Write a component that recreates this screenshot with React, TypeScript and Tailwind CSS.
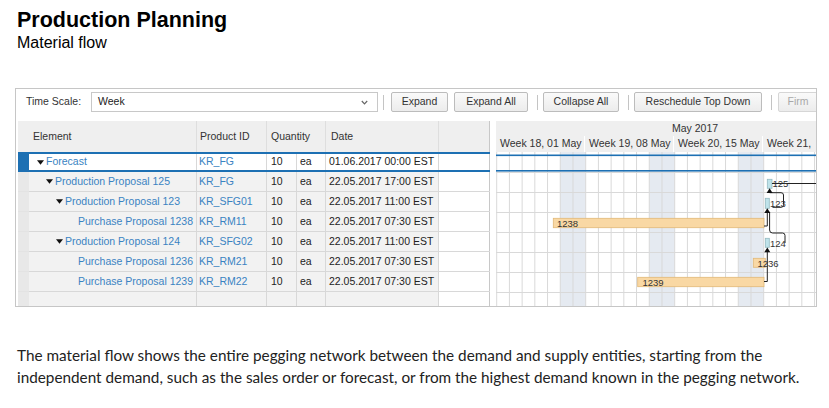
import type { ReactNode } from "react";

type Row = {
  level: number;
  expandable: boolean;
  name: string;
  product: string;
  date: string;
  selected?: boolean;
};

const rows: Row[] = [
  { level: 0, expandable: true, name: "Forecast", product: "KR_FG", date: "01.06.2017 00:00 EST", selected: true },
  { level: 1, expandable: true, name: "Production Proposal 125", product: "KR_FG", date: "22.05.2017 17:00 EST" },
  { level: 2, expandable: true, name: "Production Proposal 123", product: "KR_SFG01", date: "22.05.2017 11:00 EST" },
  { level: 3, expandable: false, name: "Purchase Proposal 1238", product: "KR_RM11", date: "22.05.2017 07:30 EST" },
  { level: 2, expandable: true, name: "Production Proposal 124", product: "KR_SFG02", date: "22.05.2017 11:00 EST" },
  { level: 3, expandable: false, name: "Purchase Proposal 1236", product: "KR_RM21", date: "22.05.2017 07:30 EST" },
  { level: 3, expandable: false, name: "Purchase Proposal 1239", product: "KR_RM22", date: "22.05.2017 07:30 EST" },
];

const cols = "grid grid-cols-[11px_168px_70px_30px_29px_113px_51px]";
const indent = ["pl-[8px]", "pl-[17px]", "pl-[27px]", "pl-[49px]"];

function Button({ children, width, disabled }: { children: ReactNode; width: string; disabled?: boolean }) {
  return (
    <div
      className={`flex h-[20px] shrink-0 items-center justify-center rounded-[2px] border bg-gradient-to-b from-[#fafafa] to-[#ececec] ${width} ${
        disabled ? "border-[#d6d6d6] text-[#a8a8a8]" : "border-[#bcbcbc] text-[#333]"
      }`}
    >
      {children}
    </div>
  );
}

function Sep({ ml }: { ml: string }) {
  return <div className={`h-[15px] w-px shrink-0 bg-[#c4c4c4] ${ml}`} />;
}

function Caret() {
  return (
    <svg width="7" height="5" viewBox="0 0 7 5" className="mr-[2px] shrink-0">
      <path d="M0 0.3 L7 0.3 L3.5 4.8 Z" fill="#111" />
    </svg>
  );
}

function TableRow({ row }: { row: Row }) {
  if (row.selected) {
    return (
      <div className={`${cols} h-[20px]`}>
        <div className="bg-[#1d70b3]" />
        <div className="col-span-6 grid grid-cols-[168px_70px_30px_29px_113px_51px] border-y-2 border-[#1d70b3] bg-white">
          <Cells row={row} />
        </div>
      </div>
    );
  }
  return (
    <div className={`${cols} h-[20px]`}>
      <div className="border-b border-[#e3e3e3] bg-[#e8e8e8]" />
      <div className="col-span-6 grid grid-cols-[168px_70px_30px_29px_113px_51px] border-b border-[#d8d8d8] bg-[#f2f2f2]">
        <Cells row={row} />
      </div>
    </div>
  );
}

function Cells({ row }: { row: Row }) {
  return (
    <>
      <div className={`flex items-center border-r border-[#d8d8d8] ${indent[row.level]} text-[#3a83c2]`}>
        {row.expandable && <Caret />}
        <span className="whitespace-nowrap">{row.name}</span>
      </div>
      <div className="flex items-center border-r border-[#d8d8d8] pl-[2px] text-[#3a83c2]">{row.product}</div>
      <div className="flex items-center border-r border-[#d8d8d8] pl-[4px]">10</div>
      <div className="flex items-center border-r border-[#d8d8d8] pl-[3px]">ea</div>
      <div className="flex items-center whitespace-nowrap border-r border-[#d8d8d8] pl-[3px]">{row.date}</div>
      <div className="border-r border-[#c8c8c8] bg-white" />
    </>
  );
}

const DAY = 89 / 7;
const X0 = 0.7;

function Gantt() {
  const lines = [];
  const shades = [];
  for (let k = 0; k < 26; k++) {
    const x = X0 + k * DAY;
    lines.push(<line key={`v${k}`} x1={x} y1={0} x2={x} y2={154} stroke="#d9d9d9" strokeWidth={1} />);
    if (k % 7 === 5) {
      shades.push(<rect key={`s${k}`} x={x} y={0} width={DAY * 2} height={154} fill="#e5eaf1" />);
    }
  }
  const hlines = [20, 40, 60, 80, 100, 120, 140].map((y) => (
    <line key={`h${y}`} x1={0} y1={y + 0.5} x2={320} y2={y + 0.5} stroke="#d9d9d9" strokeWidth={1} />
  ));
  const label = { fontFamily: "'Liberation Sans', Arial, sans-serif", fontSize: 9.5, fill: "#333" };
  return (
    <svg width="320" height="154" viewBox="0 0 320 154" className="block">
      <rect width="320" height="154" fill="#fff" />
      {shades}
      {lines}
      {hlines}
      <rect x="0" y="2.5" width="320" height="1.6" fill="#1d70b3" />
      <rect x="0" y="18" width="320" height="1.6" fill="#1d70b3" />

      {/* bars */}
      <rect x="57.3" y="66.3" width="210.7" height="9.4" fill="#f9d8a4" stroke="#e2b877" strokeWidth="0.8" />
      <rect x="141.7" y="125.3" width="126.3" height="9.4" fill="#f9d8a4" stroke="#e2b877" strokeWidth="0.8" />
      <rect x="257.3" y="106.3" width="12" height="9" fill="#f9d8a4" stroke="#e2b877" strokeWidth="0.8" />
      <rect x="271.3" y="27.3" width="4.7" height="9" fill="#bfe3ea" stroke="#93b9c1" strokeWidth="0.8" />
      <rect x="269.3" y="46.3" width="4" height="10" fill="#bfe3ea" stroke="#93b9c1" strokeWidth="0.8" />
      <rect x="269.3" y="86.3" width="4" height="9" fill="#bfe3ea" stroke="#93b9c1" strokeWidth="0.8" />

      {/* connectors */}
      <g fill="none" stroke="#222" strokeWidth="1">
        <path d="M276 31.5 L320 31.5" />
        <path d="M276.5 55.3 L285 55.3 Q287.5 55.3 287.5 52.8 L287.5 43 Q287.5 40.7 285 40.7 L273.6 40.7 L273.6 40" />
        <path d="M268 74 L271.3 74 L271.3 60" />
        <path d="M273.6 60 L273.6 78 Q273.6 81 276.6 81 L286.5 81 Q289 81 289 83.5 L289 91" />
        <path d="M268 129.5 L271.3 129.5 L271.3 99" />
      </g>
      <g fill="#111">
        <path d="M273.6 36.3 L276.6 41 L270.6 41 Z" />
        <path d="M271.3 56.3 L274.3 61 L268.3 61 Z" />
        <path d="M271.3 95.5 L274.3 100.2 L268.3 100.2 Z" />
      </g>

      <text x="276.5" y="35" style={label}>125</text>
      <text x="274" y="54.5" style={label}>123</text>
      <text x="274" y="94.5" style={label}>124</text>
      <text x="261.5" y="114.5" style={label}>1236</text>
      <text x="61" y="74.5" style={label}>1238</text>
      <text x="146.5" y="133.5" style={label}>1239</text>
    </svg>
  );
}

export default function App() {
  return (
    <div className="min-h-[408px] w-[829px] bg-white font-['Liberation_Sans',Arial,sans-serif] text-black">
      <div className="pl-[17px] pt-[9px]">
        <h1 className="text-[21.5px] font-bold leading-[22px]">Production Planning</h1>
        <p className="mt-[3px] text-[16px] leading-[18px]">Material flow</p>
      </div>

      <div className="ml-[15px] mt-[36px] h-[219px] w-[802px] overflow-hidden border border-[#c6c6c6] bg-white pl-[2px] text-[10.5px] text-[#222]">
        {/* toolbar */}
        <div className="flex h-[30px] items-start overflow-hidden pt-[3px] text-[#333]">
          <div className="flex h-[20px] w-[73px] shrink-0 items-center pl-[8px]">Time Scale:</div>
          <div className="flex h-[20px] w-[287px] shrink-0 items-center justify-between border border-[#c8c8c8] bg-white pl-[6px] pr-[9px] text-[#222]">
            <span>Week</span>
            <svg width="7" height="5" viewBox="0 0 7 5">
              <path d="M0.8 1 L3.5 3.8 L6.2 1" fill="none" stroke="#666" strokeWidth="1.2" />
            </svg>
          </div>
          <div className="flex h-[20px] items-center">
            <Sep ml="ml-[5px]" />
          </div>
          <div className="ml-[7px]">
            <Button width="w-[57px]">Expand</Button>
          </div>
          <div className="ml-[6px]">
            <Button width="w-[74px]">Expand All</Button>
          </div>
          <div className="flex h-[20px] items-center">
            <Sep ml="ml-[9px]" />
          </div>
          <div className="ml-[5px]">
            <Button width="w-[76px]">Collapse All</Button>
          </div>
          <div className="flex h-[20px] items-center">
            <Sep ml="ml-[9px]" />
          </div>
          <div className="ml-[5px]">
            <Button width="w-[128px]">Reschedule Top Down</Button>
          </div>
          <div className="flex h-[20px] items-center">
            <Sep ml="ml-[9px]" />
          </div>
          <div className="ml-[6px]">
            <Button width="w-[40px]" disabled>
              Firm
            </Button>
          </div>
        </div>

        {/* table + gantt */}
        <div className="mt-[2px] flex">
          <div className="w-[472px] shrink-0">
            <div className={`${cols} h-[31px] bg-[#efefef] text-[#333]`}>
              <div />
              <div className="flex items-center border-r border-[#dedede] pl-[4px]">Element</div>
              <div className="flex items-center border-r border-[#dedede] pl-[3px]">Product ID</div>
              <div className="col-span-2 flex items-center border-r border-[#dedede] pl-[4px]">Quantity</div>
              <div className="flex items-center border-r border-[#dedede] pl-[5px]">Date</div>
              <div className="border-r border-[#c8c8c8]" />
            </div>
            {rows.map((r) => (
              <TableRow key={r.name} row={r} />
            ))}
            <div className={`${cols} h-[20px]`}>
              <div className="bg-[#e8e8e8]" />
              <div className="col-span-6 grid grid-cols-[168px_70px_30px_29px_113px_51px] bg-[#f2f2f2]">
                <div className="border-r border-[#d8d8d8]" />
                <div className="border-r border-[#d8d8d8]" />
                <div className="border-r border-[#d8d8d8]" />
                <div className="border-r border-[#d8d8d8]" />
                <div className="border-r border-[#d8d8d8]" />
                <div className="border-r border-[#c8c8c8] bg-white" />
              </div>
            </div>
          </div>
          <div className="w-[6px] shrink-0 bg-white" />
          <div className="w-[320px] shrink-0">
            <div className="h-[15px] bg-[#efefef] pl-[176px] leading-[15px] text-[#333]">May 2017</div>
            <div className="flex h-[16px] bg-[#efefef] text-[#333]">
              {["Week 18, 01 May", "Week 19, 08 May", "Week 20, 15 May", "Week 21,"].map((w) => (
                <div
                  key={w}
                  className="flex h-full w-[89px] shrink-0 items-center overflow-hidden whitespace-nowrap border-r border-white pl-[4px]"
                >
                  {w}
                </div>
              ))}
            </div>
            <Gantt />
          </div>
        </div>
      </div>

      <p className="ml-[17px] mt-[37px] font-['Lato',sans-serif] text-[15.3px] leading-[22px] text-[#222]">
        The material flow shows the entire pegging network between the demand and supply entities, starting from the
        <br />
        independent demand, such as the sales order or forecast, or from the highest demand known in the pegging network.
      </p>
    </div>
  );
}
